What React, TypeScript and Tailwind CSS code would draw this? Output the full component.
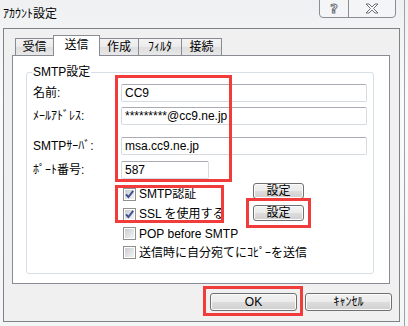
import React from "react"

const font = "font-['Liberation_Sans','Noto_Sans_CJK_JP',sans-serif]"

const Check = ({checked}: {checked: boolean}) => (
  <svg width="13" height="13" viewBox="0 0 13 13" className="shrink-0">
    <defs>
      <linearGradient id="cbg" x1="0" y1="0" x2="1" y2="1">
        <stop offset="0" stopColor="#c9ccd1" />
        <stop offset="1" stopColor="#f4f4f4" />
      </linearGradient>
    </defs>
    <rect x="0.5" y="0.5" width="12" height="12" fill="#fff" stroke="#8e8f8f" />
    <rect x="2" y="2" width="9" height="9" fill="url(#cbg)" />
    {checked && (
      <path d="M3 6.3 L5.4 9 L10.2 2.8" fill="none" stroke="#3a4f8e" strokeWidth="1.9" />
    )}
  </svg>
)

const CheckRow = ({checked, label, h}: {checked: boolean; label: string; h: string}) => (
  <div className={`flex items-center gap-[3px] ${h}`}>
    <Check checked={checked} />
    <span className="text-[12px] leading-[14px] whitespace-nowrap">{label}</span>
  </div>
)

const Btn = ({label, className}: {label: string; className: string}) => (
  <button
    className={`flex items-center justify-center rounded-[3px] border border-[#707070] bg-[linear-gradient(#f2f2f2,#ebebeb_50%,#dddddd_50%,#cfcfcf)] shadow-[inset_0_0_0_1px_#fbfbfb] text-[12px] leading-[12px] text-black ${className}`}
  >
    {label}
  </button>
)

const Field = ({label, value, mt, w}: {label: string; value: string; mt: string; w: string}) => (
  <div className={`flex items-center pl-[6px] h-[18px] ${mt}`}>
    <span className="w-[88px] text-[12px] leading-[14px] whitespace-nowrap">{label}</span>
    <div className={`h-[18px] ${w} flex items-center pl-[3px] bg-white border border-[#d6dbe0] border-t-[#a9adb3] rounded-[2px] text-[12px] leading-[14px]`}>
      {value}
    </div>
  </div>
)

const tabs = [
  {label: "受信", w: "w-[39px]"},
  {label: "送信", w: "w-[47px]", active: true},
  {label: "作成", w: "w-[40px]"},
  {label: "ﾌｨﾙﾀ", w: "w-[44px]"},
  {label: "接続", w: "w-[41px]"},
]

export default function App() {
  return (
    <div className={`relative w-[408px] h-[326px] overflow-hidden text-black ${font} bg-[linear-gradient(180deg,#eef0f2,#fafbfc_30%,#f4f5f6)]`}>
      {/* title bar */}
      <div className="flex items-start h-[28px]">
        <span className="ml-[3px] mt-[7px] text-[12px] leading-[14px]">ｱｶｳﾝﾄ設定</span>
        <div className="ml-auto mr-[8px] -mt-px flex h-[19px] border border-[#8a8d92] rounded-b-[4px] bg-[#f6f7f8]/70">
          <div className="w-[29px] flex items-center justify-center border-r border-[#8a8d92] text-[13px] font-bold text-transparent [-webkit-text-stroke:1px_#6b6f75] font-['DejaVu_Sans',sans-serif]">?</div>
          <div className="w-[46px] flex items-center justify-center">
            <svg width="14" height="11" viewBox="0 0 14 11">
              <path d="M1 1 H4 L7 4 L10 1 H13 L8.5 5.5 L13 10 H10 L7 7 L4 10 H1 L5.5 5.5 Z" fill="#fbfbfb" stroke="#6b6f75" strokeWidth="1" strokeLinejoin="round" />
            </svg>
          </div>
        </div>
        <div className="w-px h-[326px] bg-[#9ea2a8] mr-[3px]" />
      </div>

      {/* client area */}
      <div className="ml-[3px] w-[397px] h-[294px] border border-[#7f8388] bg-[#f0f0f0] flex flex-col">
        {/* tabs */}
        <div className="mt-[6px] ml-[11px] flex items-end">
          {tabs.map((t, i) =>
            t.active ? (
              <div key={t.label} className={`${t.w} -ml-px h-[21px] -mb-px relative z-10 bg-white border border-b-0 border-[#898c95] flex items-start justify-center pt-[2px] text-[12px] leading-[14px]`}>
                {t.label}
              </div>
            ) : (
              <div key={t.label} className={`${t.w} ${i > 0 ? "-ml-px" : ""} h-[17px] bg-[linear-gradient(#f3f3f3,#ebebeb_50%,#dedede_50%,#e8e8e8)] border border-b-0 border-[#898c95] flex items-center justify-center text-[12px] leading-[14px]`}>
                {t.label}
              </div>
            )
          )}
        </div>

        {/* tab panel */}
        <div className="ml-[8px] w-[378px] h-[229px] bg-white border border-[#898c95]">
          <div className="ml-[13px] mt-[16px] w-[348px] h-[202px] border border-[#d5dfe5] rounded-[3px] flex flex-col">
            <div className="-mt-[8px] ml-[5px] px-px h-[14px] w-fit bg-white text-[12px] leading-[14px]">SMTP設定</div>
            <Field label="名前:" value="CC9" mt="mt-[5px]" w="w-[246px]" />
            <Field label="ﾒｰﾙｱﾄﾞﾚｽ:" value="*********@cc9.ne.jp" mt="mt-[5px]" w="w-[246px]" />
            <Field label="SMTPｻｰﾊﾞ:" value="msa.cc9.ne.jp" mt="mt-[12px]" w="w-[246px]" />
            <Field label="ﾎﾟｰﾄ番号:" value="587" mt="mt-[6px]" w="w-[88px]" />

            <div className="mt-[4px] ml-[96px] flex">
              <div className="w-[130px] pt-px flex flex-col">
                <CheckRow checked label="SMTP認証" h="h-[20px]" />
                <CheckRow checked label="SSL を使用する" h="h-[20px]" />
              </div>
              <div className="flex flex-col gap-[6px]">
                <Btn label="設定" className="w-[51px] h-[16px]" />
                <Btn label="設定" className="w-[51px] h-[16px]" />
              </div>
            </div>
            <div className="ml-[96px] flex flex-col">
              <CheckRow checked={false} label="POP before SMTP" h="h-[19px]" />
              <CheckRow checked={false} label="送信時に自分宛てにｺﾋﾟｰを送信" h="h-[19px]" />
            </div>
          </div>
        </div>

        {/* dialog buttons */}
        <div className="mt-[9px] flex justify-end gap-[8px] pr-[7px]">
          <Btn label="OK" className="w-[87px] h-[18px]" />
          <Btn label="ｷｬﾝｾﾙ" className="w-[87px] h-[18px]" />
        </div>
      </div>

      {/* red annotation boxes */}
      <div className="absolute left-[115px] top-[75px] w-[117px] h-[107px] border-[3px] border-[#f23c3c]" />
      <div className="absolute left-[115px] top-[185px] w-[109px] h-[38px] border-[3px] border-[#f23c3c]" />
      <div className="absolute left-[246px] top-[198px] w-[65px] h-[30px] border-[3px] border-[#f23c3c]" />
      <div className="absolute left-[203px] top-[286px] w-[100px] h-[30px] border-[3px] border-[#f23c3c]" />
    </div>
  )
}
